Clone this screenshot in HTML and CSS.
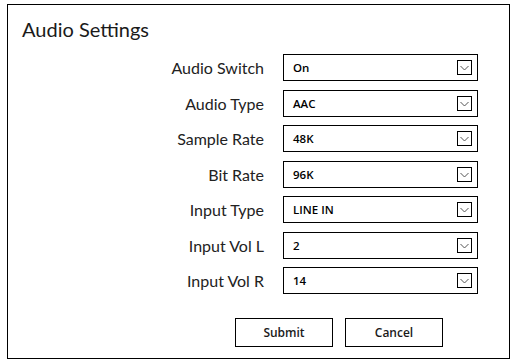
FILE: index.html
```html
<!DOCTYPE html>
<html lang="en">
<head>
    <meta charset="UTF-8">
    <title>Audio Settings</title>
    <link rel="stylesheet" href="styles.css">
</head>
<body>

<div class="panel">
    <h2 class="title">Audio Settings</h2>

    <div class="form">
        <div class="row">
            <label>Audio Switch</label>
            <div class="select"><span>On</span>
                <svg class="arrow" width="15" height="15" viewBox="0 0 15 15"><rect x="0.5" y="0.5" width="14" height="14" fill="#fff" stroke="#000"/><path d="M3.5 6 L7.5 10 L11.5 6" fill="none" stroke="#555"/></svg>
            </div>
        </div>
        <div class="row">
            <label>Audio Type</label>
            <div class="select"><span>AAC</span>
                <svg class="arrow" width="15" height="15" viewBox="0 0 15 15"><rect x="0.5" y="0.5" width="14" height="14" fill="#fff" stroke="#000"/><path d="M3.5 6 L7.5 10 L11.5 6" fill="none" stroke="#555"/></svg>
            </div>
        </div>
        <div class="row">
            <label>Sample Rate</label>
            <div class="select"><span>48K</span>
                <svg class="arrow" width="15" height="15" viewBox="0 0 15 15"><rect x="0.5" y="0.5" width="14" height="14" fill="#fff" stroke="#000"/><path d="M3.5 6 L7.5 10 L11.5 6" fill="none" stroke="#555"/></svg>
            </div>
        </div>
        <div class="row">
            <label>Bit Rate</label>
            <div class="select"><span>96K</span>
                <svg class="arrow" width="15" height="15" viewBox="0 0 15 15"><rect x="0.5" y="0.5" width="14" height="14" fill="#fff" stroke="#000"/><path d="M3.5 6 L7.5 10 L11.5 6" fill="none" stroke="#555"/></svg>
            </div>
        </div>
        <div class="row">
            <label>Input Type</label>
            <div class="select"><span>LINE IN</span>
                <svg class="arrow" width="15" height="15" viewBox="0 0 15 15"><rect x="0.5" y="0.5" width="14" height="14" fill="#fff" stroke="#000"/><path d="M3.5 6 L7.5 10 L11.5 6" fill="none" stroke="#555"/></svg>
            </div>
        </div>
        <div class="row">
            <label>Input Vol L</label>
            <div class="select"><span>2</span>
                <svg class="arrow" width="15" height="15" viewBox="0 0 15 15"><rect x="0.5" y="0.5" width="14" height="14" fill="#fff" stroke="#000"/><path d="M3.5 6 L7.5 10 L11.5 6" fill="none" stroke="#555"/></svg>
            </div>
        </div>
        <div class="row">
            <label>Input Vol R</label>
            <div class="select"><span>14</span>
                <svg class="arrow" width="15" height="15" viewBox="0 0 15 15"><rect x="0.5" y="0.5" width="14" height="14" fill="#fff" stroke="#000"/><path d="M3.5 6 L7.5 10 L11.5 6" fill="none" stroke="#555"/></svg>
            </div>
        </div>
    </div>

    <div class="buttons">
        <button class="btn">Submit</button>
        <button class="btn">Cancel</button>
    </div>
</div>

</body>
</html>
```

FILE: styles.css
```css
body {
    margin: 0;
    background: #fff;
    font-family: Lato, "Open Sans", sans-serif;
    color: #222;
}
.panel {
    box-sizing: border-box;
    width: 503px;
    height: 355px;
    margin: 4px 0 0 7px;
    border: 1px solid #000;
}
.title {
    margin: 0;
    padding: 12px 0 0 14px;
    font-size: 20px;
    font-weight: normal;
    line-height: 24px;
    color: #1a1a1a;
}
.form {
    display: flex;
    flex-direction: column;
    gap: 8.5px;
    margin-top: 13px;
}
.row {
    display: flex;
    align-items: center;
    gap: 19px;
    height: 27px;
}
.row label {
    width: 256px;
    text-align: right;
    font-size: 16px;
    color: #222;
}
.select {
    box-sizing: border-box;
    width: 195px;
    height: 27px;
    border: 1px solid #000;
    display: flex;
    align-items: center;
    justify-content: space-between;
    padding: 0 5px 0 9px;
    font-family: "Open Sans", sans-serif;
    font-size: 11.5px;
    font-weight: 600;
    color: #000;
}
.arrow {
    display: block;
}
.buttons {
    display: flex;
    gap: 12px;
    margin: 24px 0 0 227px;
}
.btn {
    box-sizing: border-box;
    width: 98px;
    height: 29px;
    border: 1px solid #000;
    background: #fff;
    font-family: "Open Sans", sans-serif;
    font-size: 12px;
    font-weight: 600;
    color: #1a1a1a;
    padding: 0;
}
```
